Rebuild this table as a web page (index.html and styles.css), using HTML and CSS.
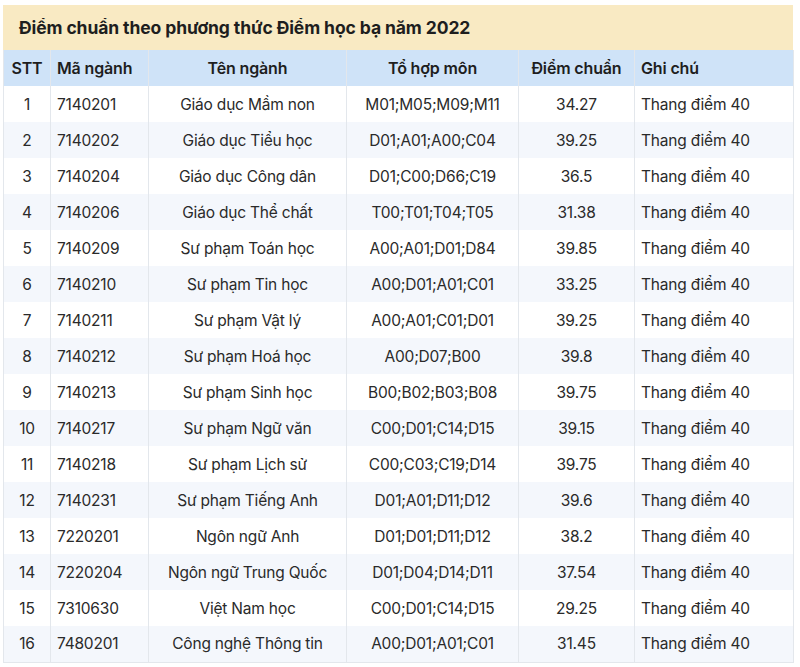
FILE: index.html
```html
<!DOCTYPE html>
<html lang="vi">
<head>
<meta charset="utf-8">
<link rel="stylesheet" href="styles.css">
</head>
<body>
<div class="wrap">
  <div class="title">Điểm chuẩn theo phương thức Điểm học bạ năm 2022</div>
  <table class="tbl">
    <colgroup>
      <col class="c1"><col class="c2"><col class="c3"><col class="c4"><col class="c5"><col class="c6">
    </colgroup>
    <thead>
      <tr><th>STT</th><th class="left">Mã ngành</th><th>Tên ngành</th><th>Tổ hợp môn</th><th>Điểm chuẩn</th><th class="left">Ghi chú</th></tr>
    </thead>
    <tbody>
      <tr><td>1</td><td class="left">7140201</td><td>Giáo dục Mầm non</td><td>M01;M05;M09;M11</td><td>34.27</td><td class="left">Thang điểm 40</td></tr>
      <tr><td>2</td><td class="left">7140202</td><td>Giáo dục Tiểu học</td><td>D01;A01;A00;C04</td><td>39.25</td><td class="left">Thang điểm 40</td></tr>
      <tr><td>3</td><td class="left">7140204</td><td>Giáo dục Công dân</td><td>D01;C00;D66;C19</td><td>36.5</td><td class="left">Thang điểm 40</td></tr>
      <tr><td>4</td><td class="left">7140206</td><td>Giáo dục Thể chất</td><td>T00;T01;T04;T05</td><td>31.38</td><td class="left">Thang điểm 40</td></tr>
      <tr><td>5</td><td class="left">7140209</td><td>Sư phạm Toán học</td><td>A00;A01;D01;D84</td><td>39.85</td><td class="left">Thang điểm 40</td></tr>
      <tr><td>6</td><td class="left">7140210</td><td>Sư phạm Tin học</td><td>A00;D01;A01;C01</td><td>33.25</td><td class="left">Thang điểm 40</td></tr>
      <tr><td>7</td><td class="left">7140211</td><td>Sư phạm Vật lý</td><td>A00;A01;C01;D01</td><td>39.25</td><td class="left">Thang điểm 40</td></tr>
      <tr><td>8</td><td class="left">7140212</td><td>Sư phạm Hoá học</td><td>A00;D07;B00</td><td>39.8</td><td class="left">Thang điểm 40</td></tr>
      <tr><td>9</td><td class="left">7140213</td><td>Sư phạm Sinh học</td><td>B00;B02;B03;B08</td><td>39.75</td><td class="left">Thang điểm 40</td></tr>
      <tr><td>10</td><td class="left">7140217</td><td>Sư phạm Ngữ văn</td><td>C00;D01;C14;D15</td><td>39.15</td><td class="left">Thang điểm 40</td></tr>
      <tr><td>11</td><td class="left">7140218</td><td>Sư phạm Lịch sử</td><td>C00;C03;C19;D14</td><td>39.75</td><td class="left">Thang điểm 40</td></tr>
      <tr><td>12</td><td class="left">7140231</td><td>Sư phạm Tiếng Anh</td><td>D01;A01;D11;D12</td><td>39.6</td><td class="left">Thang điểm 40</td></tr>
      <tr><td>13</td><td class="left">7220201</td><td>Ngôn ngữ Anh</td><td>D01;D01;D11;D12</td><td>38.2</td><td class="left">Thang điểm 40</td></tr>
      <tr><td>14</td><td class="left">7220204</td><td>Ngôn ngữ Trung Quốc</td><td>D01;D04;D14;D11</td><td>37.54</td><td class="left">Thang điểm 40</td></tr>
      <tr><td>15</td><td class="left">7310630</td><td>Việt Nam học</td><td>C00;D01;C14;D15</td><td>29.25</td><td class="left">Thang điểm 40</td></tr>
      <tr><td>16</td><td class="left">7480201</td><td>Công nghệ Thông tin</td><td>A00;D01;A01;C01</td><td>31.45</td><td class="left">Thang điểm 40</td></tr>
    </tbody>
  </table>
</div>
</body>
</html>
```
FILE: styles.css
```css
html, body {
  margin: 0;
  padding: 0;
  background: #ffffff;
}
body {
  font-family: Inter, "Noto Sans", "Liberation Sans", sans-serif;
  color: #222222;
}
.wrap {
  width: 790px;
  margin: 5px 0 0 3px;
}
.title {
  height: 45px;
  box-sizing: border-box;
  background: #f9eac3;
  font-weight: 700;
  font-size: 17.5px;
  letter-spacing: -0.1px;
  line-height: 45px;
  padding-left: 16px;
  color: #1e1e1e;
}
.tbl {
  width: 790px;
  border-collapse: collapse;
  table-layout: fixed;
  font-size: 15.5px;
  letter-spacing: -0.2px;
}
.c1 { width: 47px; }
.c2 { width: 98px; }
.c3 { width: 198px; }
.c4 { width: 172px; }
.c5 { width: 116px; }
.c6 { width: 159px; }
.tbl th, .tbl td {
  height: 36px;
  box-sizing: border-box;
  padding: 0 6px;
  text-align: center;
  border-left: 1px solid #e3e7ec;
  border-right: 1px solid #e3e7ec;
  white-space: nowrap;
}
.tbl th {
  background: #cfe3f8;
  font-weight: 600;
  font-size: 16px;
  letter-spacing: -0.15px;
  color: #1e1e1e;
}
.tbl td {
  font-weight: 400;
  color: #2a2a2a;
}
.tbl .left {
  text-align: left;
}
.tbl tbody tr:nth-child(even) td {
  background: #f4f7fc;
}
.tbl tbody tr:last-child td {
  border-bottom: 1px solid #e3e7ec;
}
```
